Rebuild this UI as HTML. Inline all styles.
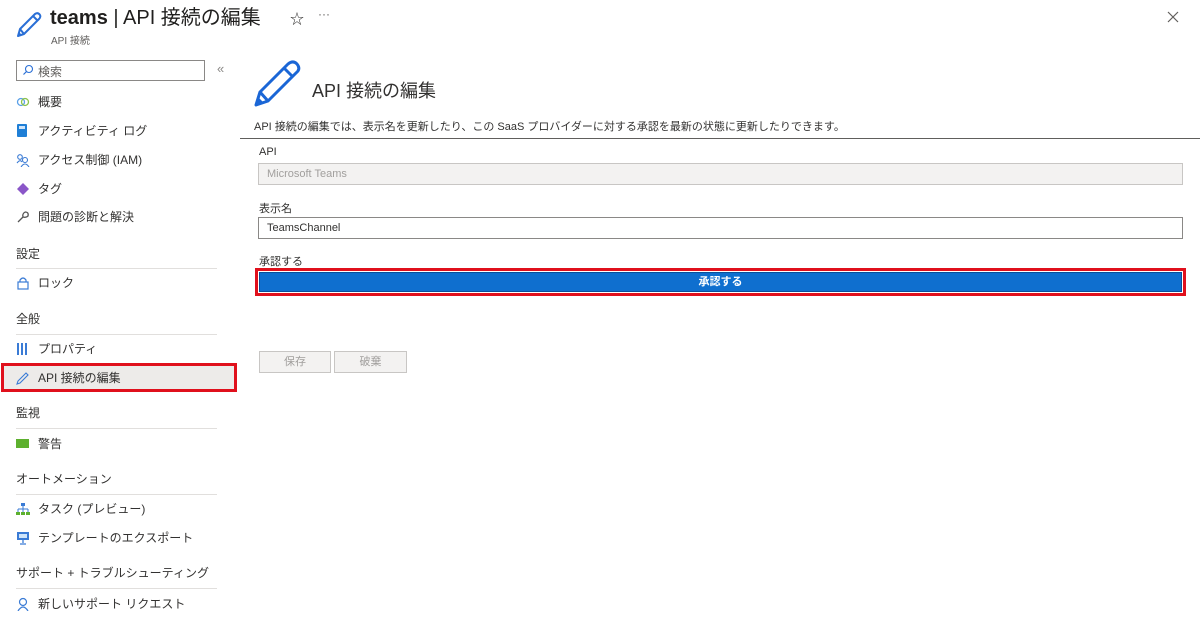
<!DOCTYPE html>
<html><head><meta charset="utf-8"><style>
*{margin:0;padding:0;box-sizing:border-box}
body{width:1200px;height:622px;background:#fff;font-family:"Liberation Sans","Noto Sans CJK JP",sans-serif;color:#323130;position:relative;overflow:hidden;font-size:12px}
.a{position:absolute;white-space:nowrap}
.nav{position:absolute;left:38px;font-size:12px;color:#323130;line-height:14px}
.hd{position:absolute;left:16px;font-size:12px;color:#323130;line-height:14px}
.ln{position:absolute;left:16px;width:201px;height:1px;background:#e1dfdd}
.ic{position:absolute;left:16px}
</style></head><body>
<svg class="a" style="left:14px;top:10px" width="30" height="30" viewBox="0 0 30 30"><path d="M4 26 L6 19 L21 4 Q24 2 26 5 Q27 7 25 9 L10 24 Z M6 19 L10 24 M19 6 L24 11" fill="none" stroke="#2a6fd6" stroke-width="2" stroke-linejoin="round"/><path d="M4 26 L5 22 L8 25 Z" fill="#2a6fd6"/></svg>
<div class="a" style="left:50px;top:6px;font-size:20px;color:#201f1e;line-height:24px"><b style="font-weight:600">teams</b> | API 接続の編集</div>
<div class="a" style="left:290px;top:9px;font-size:14px">☆</div>
<div class="a" style="left:318px;top:7px;font-size:12px;color:#605e5c">···</div>
<div class="a" style="left:51px;top:32px;font-size:10px;color:#605e5c">API 接続</div>
<svg class="a" style="left:1167px;top:11px" width="12" height="12"><path d="M1 1L11 11M11 1L1 11" stroke="#605e5c" stroke-width="1.2"/></svg>

<div class="a" style="left:16px;top:60px;width:189px;height:21px;border:1px solid #8a8886"></div>
<svg class="a" style="left:22px;top:64px" width="12" height="12" viewBox="0 0 12 12"><circle cx="7" cy="5" r="3.5" fill="none" stroke="#2a6fd6" stroke-width="1.1"/><path d="M4.5 7.5 L1.5 10.5" stroke="#2a6fd6" stroke-width="1.2"/></svg>
<div class="a" style="left:38px;top:63px;font-size:12px;color:#605e5c">検索</div>
<div class="a" style="left:217px;top:61px;font-size:13px;color:#8a8886">«</div>

<svg class="ic" style="top:96px" width="14" height="12"><circle cx="5" cy="6" r="3.5" fill="none" stroke="#5aa0e8" stroke-width="1.3"/><circle cx="9" cy="6" r="3.5" fill="none" stroke="#8cc34a" stroke-width="1.3"/></svg>
<div class="nav" style="top:95px">概要</div>
<div class="ic" style="top:124px;left:17px;width:10px;height:13px;background:#1f7fd6;border-radius:1px"><div style="margin:2px;height:3px;background:#cfe5fa"></div></div>
<div class="nav" style="top:124px">アクティビティ ログ</div>
<svg class="ic" style="top:153px" width="14" height="14"><circle cx="4" cy="4" r="2.3" fill="none" stroke="#3a7bd5" stroke-width="1.1"/><circle cx="9" cy="7" r="2.5" fill="none" stroke="#3a7bd5" stroke-width="1.1"/><path d="M1 10 Q4 6 6 9 M5 14 Q9 8 13 14" fill="none" stroke="#3a7bd5" stroke-width="1.1"/></svg>
<div class="nav" style="top:153px">アクセス制御 (IAM)</div>
<svg class="ic" style="top:182px" width="14" height="14"><path d="M7 1 L13 7 L7 13 L1 7 Z" fill="#8a56c8"/></svg>
<div class="nav" style="top:182px">タグ</div>
<svg class="ic" style="top:210px" width="14" height="14"><path d="M2 12 L7 7 M9 2 Q13 2 12 6 Q10 8 7 7 Q6 4 9 2" fill="none" stroke="#555" stroke-width="1.3"/></svg>
<div class="nav" style="top:210px">問題の診断と解決</div>

<div class="hd" style="top:247px">設定</div><div class="ln" style="top:268px"></div>
<svg class="ic" style="top:276px" width="14" height="14"><rect x="2" y="6" width="10" height="7" fill="none" stroke="#3a7bd5" stroke-width="1.2"/><path d="M4 6 V4 Q7 0 10 4 V6" fill="none" stroke="#3a7bd5" stroke-width="1.2"/></svg>
<div class="nav" style="top:276px">ロック</div>
<div class="hd" style="top:312px">全般</div><div class="ln" style="top:334px"></div>
<svg class="ic" style="top:342px" width="14" height="14"><path d="M2 1V13M6 1V13M10 1V13" stroke="#3a7bd5" stroke-width="2"/></svg>
<div class="nav" style="top:342px">プロパティ</div>
<div class="a" style="left:1px;top:363px;width:236px;height:29px;border:3px solid #e0101c;background:#edebe9"></div>
<svg class="ic" style="top:371px" width="14" height="14"><path d="M1 13 L2 10 L10 2 L12 4 L4 12 Z" fill="none" stroke="#3a7bd5" stroke-width="1.1"/></svg>
<div class="nav" style="top:371px">API 接続の編集</div>
<div class="hd" style="top:406px">監視</div><div class="ln" style="top:428px"></div>
<div class="ic" style="top:439px;width:13px;height:9px;background:#5db02e"></div>
<div class="nav" style="top:437px">警告</div>
<div class="hd" style="top:472px">オートメーション</div><div class="ln" style="top:494px"></div>
<svg class="ic" style="top:502px" width="14" height="14"><rect x="5" y="1" width="4" height="3" fill="#3a7bd5"/><path d="M7 4V7M2 7H12M2 7V10M7 7V10M12 7V10" stroke="#3a7bd5"/><rect x="0" y="10" width="4" height="3" fill="#5db02e"/><rect x="5" y="10" width="4" height="3" fill="#5db02e"/><rect x="10" y="10" width="4" height="3" fill="#5db02e"/></svg>
<div class="nav" style="top:502px">タスク (プレビュー)</div>
<svg class="ic" style="top:531px" width="14" height="14"><rect x="1" y="1" width="12" height="8" fill="#3a7bd5"/><rect x="3" y="3" width="8" height="4" fill="#cfe5fa"/><path d="M7 9V12M4 13H10" stroke="#3a7bd5" stroke-width="1.3"/></svg>
<div class="nav" style="top:531px">テンプレートのエクスポート</div>
<div class="hd" style="top:566px">サポート + トラブルシューティング</div><div class="ln" style="top:588px"></div>
<svg class="ic" style="top:597px" width="14" height="14"><circle cx="7" cy="5" r="3.5" fill="none" stroke="#3a7bd5" stroke-width="1.2"/><path d="M2 14 Q7 6 12 14" fill="none" stroke="#3a7bd5" stroke-width="1.2"/></svg>
<div class="nav" style="top:597px">新しいサポート リクエスト</div>

<svg class="a" style="left:253px;top:60px" width="50" height="48" viewBox="0 0 50 48"><path d="M3 45 L7 32 L35 4 Q40 0 44 4 Q48 9 43 13 L15 41 Z M7 32 L15 41 M31 8 L40 17" fill="none" stroke="#1a66d6" stroke-width="3" stroke-linejoin="round"/><path d="M3 45 L5 37 L11 43 Z" fill="#1a66d6"/></svg>
<div class="a" style="left:312px;top:77px;font-size:18px;color:#323130">API 接続の編集</div>
<div class="a" style="left:254px;top:118px;font-size:11px;color:#323130">API 接続の編集では、表示名を更新したり、この SaaS プロバイダーに対する承認を最新の状態に更新したりできます。</div>
<div class="a" style="left:240px;top:138px;width:960px;height:1px;background:#605e5c"></div>
<div class="a" style="left:259px;top:146px;font-size:11px">API</div>
<div class="a" style="left:258px;top:163px;width:925px;height:22px;border:1px solid #c8c6c4;background:#f3f2f1;padding:4px 8px;font-size:11px;line-height:13px;color:#a19f9d">Microsoft Teams</div>
<div class="a" style="left:259px;top:200px;font-size:11px">表示名</div>
<div class="a" style="left:258px;top:217px;width:925px;height:22px;border:1px solid #8a8886;padding:4px 8px;font-size:11px;line-height:13px">TeamsChannel</div>
<div class="a" style="left:259px;top:253px;font-size:11px">承認する</div>
<div class="a" style="left:255px;top:268px;width:931px;height:28px;border:3px solid #e0101c;background:#fff"><div style="margin:1px;height:20px;background:#0f6fcf;border:1px solid #0a4f9a;color:#fff;font-weight:bold;font-size:11px;text-align:center;line-height:18px">承認する</div></div>
<div class="a" style="left:259px;top:351px;width:72px;height:22px;border:1px solid #c8c6c4;background:#f3f2f1;color:#a19f9d;font-size:11px;text-align:center;line-height:20px">保存</div>
<div class="a" style="left:334px;top:351px;width:73px;height:22px;border:1px solid #c8c6c4;background:#f3f2f1;color:#a19f9d;font-size:11px;text-align:center;line-height:20px">破棄</div>
</body></html>
